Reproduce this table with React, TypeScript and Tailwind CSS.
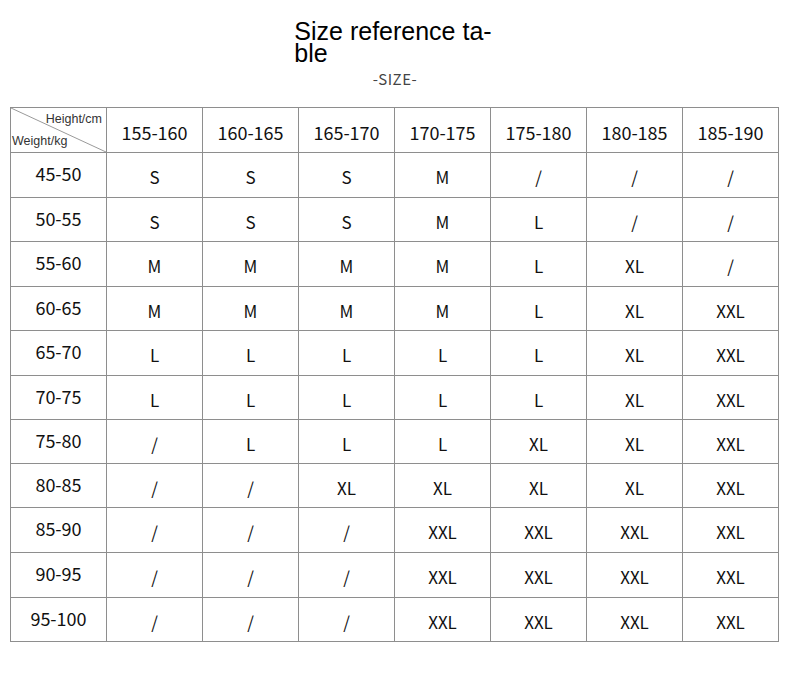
const heights = ["155-160", "160-165", "165-170", "170-175", "175-180", "180-185", "185-190"];

const rows: { weight: string; h: string; sizes: string[] }[] = [
  { weight: "45-50", h: "h-[45px]", sizes: ["S", "S", "S", "M", "/", "/", "/"] },
  { weight: "50-55", h: "h-[44px]", sizes: ["S", "S", "S", "M", "L", "/", "/"] },
  { weight: "55-60", h: "h-[45px]", sizes: ["M", "M", "M", "M", "L", "XL", "/"] },
  { weight: "60-65", h: "h-[44px]", sizes: ["M", "M", "M", "M", "L", "XL", "XXL"] },
  { weight: "65-70", h: "h-[45px]", sizes: ["L", "L", "L", "L", "L", "XL", "XXL"] },
  { weight: "70-75", h: "h-[44px]", sizes: ["L", "L", "L", "L", "L", "XL", "XXL"] },
  { weight: "75-80", h: "h-[44px]", sizes: ["/", "L", "L", "L", "XL", "XL", "XXL"] },
  { weight: "80-85", h: "h-[44px]", sizes: ["/", "/", "XL", "XL", "XL", "XL", "XXL"] },
  { weight: "85-90", h: "h-[45px]", sizes: ["/", "/", "/", "XXL", "XXL", "XXL", "XXL"] },
  { weight: "90-95", h: "h-[45px]", sizes: ["/", "/", "/", "XXL", "XXL", "XXL", "XXL"] },
  { weight: "95-100", h: "h-[44px]", sizes: ["/", "/", "/", "XXL", "XXL", "XXL", "XXL"] },
];

const cell = "flex items-center justify-center border-r border-b border-[#8e8e8e]";

export default function App() {
  return (
    <div className="w-[790px] h-[676px] bg-white text-[#111] [font-family:'Noto_Sans_CJK_SC','Noto_Sans',sans-serif]">
      <div className="flex flex-col items-center pt-[20px]">
        <h1 className="w-fit pr-[4px] text-[25px] leading-[22px] font-normal text-black [font-family:'Liberation_Sans',Arial,sans-serif]">
          <span className="block">Size reference ta-</span>
          <span className="block">ble</span>
        </h1>
        <p className="mt-[8px] text-[15px] leading-[14px] tracking-[0.5px] text-[#444]">-SIZE-</p>
      </div>

      <div className="mt-[21px] ml-[10px] w-[769px] grid grid-cols-[repeat(8,96px)] border-l border-t border-[#8e8e8e] text-[18px]">
        {/* corner cell */}
        <div className="relative h-[45px] border-r border-b border-[#8e8e8e] text-[12.5px] leading-none text-[#333] [font-family:'Liberation_Sans',Arial,sans-serif]">
          <svg className="absolute inset-0 w-full h-full" viewBox="0 0 95 44" preserveAspectRatio="none">
            <line x1="0" y1="0" x2="95" y2="44" stroke="#9a9a9a" strokeWidth="1" />
          </svg>
          <span className="absolute right-[4px] top-[5px]">Height/cm</span>
          <span className="absolute left-[1px] bottom-[5px]">Weight/kg</span>
        </div>
        {heights.map((h) => (
          <div key={h} className={`${cell} h-[45px] pt-[4px]`}>
            {h}
          </div>
        ))}

        {rows.map((r) => (
          <>
            <div key={r.weight} className={`${cell} ${r.h} pb-[3px]`}>
              {r.weight}
            </div>
            {r.sizes.map((s, i) => (
              <div key={r.weight + i} className={`${cell} ${r.h} pt-[4px] text-[17px]`}>
                {s}
              </div>
            ))}
          </>
        ))}
      </div>
    </div>
  );
}
